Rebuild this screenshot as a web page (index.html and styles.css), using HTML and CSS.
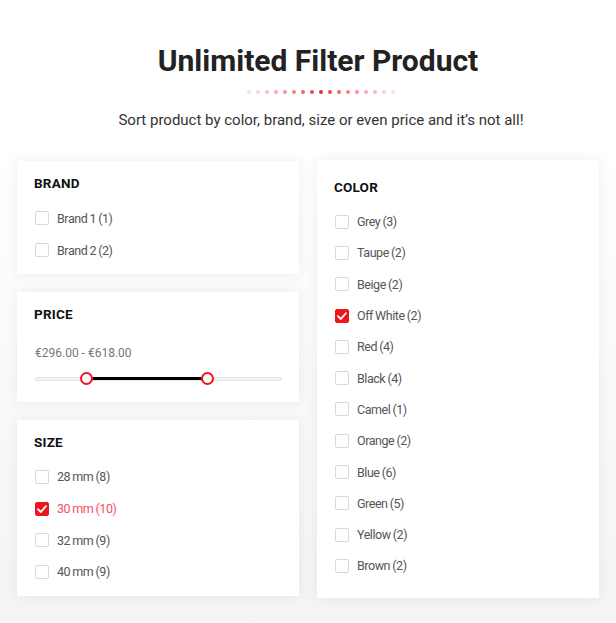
FILE: index.html
```html
<!DOCTYPE html>
<html lang="en">
<head>
<meta charset="utf-8">
<title>Unlimited Filter Product</title>
<link rel="stylesheet" href="styles.css">
</head>
<body>
<header class="hero">
  <h1 class="hero-title">Unlimited Filter Product</h1>
  <div class="dots">
    <span class="dot o1"></span><span class="dot o2"></span><span class="dot o3"></span><span class="dot o4"></span><span class="dot o5"></span><span class="dot o6"></span><span class="dot o7"></span><span class="dot o8"></span><span class="dot o9"></span><span class="dot o8"></span><span class="dot o7"></span><span class="dot o6"></span><span class="dot o5"></span><span class="dot o4"></span><span class="dot o3"></span><span class="dot o2"></span><span class="dot o1"></span>
  </div>
  <p class="hero-sub">Sort product by color, brand, size or even price and it’s not all!</p>
</header>

<main class="filters">
  <div class="col">
    <section class="card card-brand">
      <h2 class="card-title">BRAND</h2>
      <ul class="opts">
        <li class="opt"><span class="box"></span><span class="lbl">Brand 1 (1)</span></li>
        <li class="opt"><span class="box"></span><span class="lbl">Brand 2 (2)</span></li>
      </ul>
    </section>

    <section class="card card-price">
      <h2 class="card-title">PRICE</h2>
      <div class="price">€296.00 - €618.00</div>
      <div class="slider">
        <div class="track"></div>
        <div class="range" style="left:51px;width:121px"></div>
        <span class="knob" style="left:51px"></span>
        <span class="knob" style="left:172px"></span>
      </div>
    </section>

    <section class="card">
      <h2 class="card-title">SIZE</h2>
      <ul class="opts opts-mid">
        <li class="opt"><span class="box"></span><span class="lbl">28 mm (8)</span></li>
        <li class="opt active"><span class="box on"><svg viewBox="0 0 14 14" width="14" height="14"><path d="M3 7.2 L5.8 10 L11 4.2" fill="none" stroke="#fff" stroke-width="1.8" stroke-linecap="round" stroke-linejoin="round"/></svg></span><span class="lbl">30 mm (10)</span></li>
        <li class="opt"><span class="box"></span><span class="lbl">32 mm (9)</span></li>
        <li class="opt"><span class="box"></span><span class="lbl">40 mm (9)</span></li>
      </ul>
    </section>
  </div>

  <section class="card card-color">
    <h2 class="card-title">COLOR</h2>
    <ul class="opts opts-tight">
      <li class="opt"><span class="box"></span><span class="lbl">Grey (3)</span></li>
      <li class="opt"><span class="box"></span><span class="lbl">Taupe (2)</span></li>
      <li class="opt"><span class="box"></span><span class="lbl">Beige (2)</span></li>
      <li class="opt"><span class="box on"><svg viewBox="0 0 14 14" width="14" height="14"><path d="M3 7.2 L5.8 10 L11 4.2" fill="none" stroke="#fff" stroke-width="1.8" stroke-linecap="round" stroke-linejoin="round"/></svg></span><span class="lbl">Off White (2)</span></li>
      <li class="opt"><span class="box"></span><span class="lbl">Red (4)</span></li>
      <li class="opt"><span class="box"></span><span class="lbl">Black (4)</span></li>
      <li class="opt"><span class="box"></span><span class="lbl">Camel (1)</span></li>
      <li class="opt"><span class="box"></span><span class="lbl">Orange (2)</span></li>
      <li class="opt"><span class="box"></span><span class="lbl">Blue (6)</span></li>
      <li class="opt"><span class="box"></span><span class="lbl">Green (5)</span></li>
      <li class="opt"><span class="box"></span><span class="lbl">Yellow (2)</span></li>
      <li class="opt"><span class="box"></span><span class="lbl">Brown (2)</span></li>
    </ul>
  </section>
</main>
</body>
</html>
```

FILE: styles.css
```css
* { box-sizing: border-box; }

html, body {
  margin: 0;
  padding: 0;
}

body {
  width: 616px;
  min-height: 623px;
  font-family: Roboto, "Liberation Sans", Arial, sans-serif;
  background: linear-gradient(to bottom, #ffffff 0px, #ffffff 140px, #f4f4f4 623px);
  color: #333;
}

.hero {
  padding-top: 44px;
  padding-left: 26px;
  text-align: center;
}

.hero-title {
  margin: 0;
  padding-right: 6px;
  font-size: 30px;
  line-height: 34px;
  font-weight: 700;
  color: #222;
}

.dots {
  margin-top: 12px;
  display: flex;
  justify-content: center;
  gap: 5px;
  height: 4px;
}

.dot {
  width: 4px;
  height: 4px;
  border-radius: 50%;
  background: #f0263f;
}
.o1 { opacity: 0.15; }
.o2 { opacity: 0.22; }
.o3 { opacity: 0.3; }
.o4 { opacity: 0.4; }
.o5 { opacity: 0.5; }
.o6 { opacity: 0.6; }
.o7 { opacity: 0.72; }
.o8 { opacity: 0.85; }
.o9 { opacity: 1; }

.hero-sub {
  margin: 16px 0 0;
  font-size: 15px;
  line-height: 20px;
  color: #333;
}

.filters {
  margin-top: 30px;
  padding: 0 17px;
  display: grid;
  grid-template-columns: 282px 282px;
  column-gap: 18px;
  align-items: start;
}

.col {
  display: flex;
  flex-direction: column;
  gap: 18px;
  padding-top: 1px;
}

.card {
  background: #fff;
  box-shadow: 0 0 12px rgba(0, 0, 0, 0.07);
  padding: 14px 17px 8px;
}

.card-title {
  margin: 0;
  font-size: 13.5px;
  line-height: 16px;
  font-weight: 700;
  color: #111;
  letter-spacing: 0.2px;
}

.opts {
  list-style: none;
  margin: 11px 0 0;
  padding: 0;
}

.opt {
  height: 32px;
  display: flex;
  align-items: center;
  gap: 8px;
  padding-left: 1px;
}

.opts-mid .opt { height: 31.7px; }
.opts-tight .opt { height: 31.3px; }

.box {
  width: 14px;
  height: 14px;
  border: 1px solid #d9d9d9;
  border-radius: 2px;
  background: #fff;
  flex: none;
  display: flex;
}

.box.on {
  background: #f0141e;
  border-color: #f0141e;
}
.box.on svg { margin: -1px; }

.lbl {
  font-size: 12.5px;
  color: #555;
  letter-spacing: -0.45px;
  word-spacing: -0.5px;
}

.active .lbl { color: #f5505a; }

.card-price { padding-bottom: 17px; }

.price {
  margin-top: 23px;
  font-size: 12px;
  line-height: 16px;
  color: #777;
  padding-left: 1px;
}

.slider {
  position: relative;
  margin-top: 11px;
  height: 13px;
  margin-left: 1px;
}

.track {
  position: absolute;
  left: 0;
  right: 0;
  top: 4.5px;
  height: 4px;
  border: 1px solid #e6e6e6;
  background: #f4f4f4;
  border-radius: 2px;
}

.range {
  position: absolute;
  top: 5px;
  height: 3px;
  background: #000;
}

.knob {
  position: absolute;
  top: 0;
  width: 13px;
  height: 13px;
  margin-left: -6.5px;
  border-radius: 50%;
  background: #fff;
  border: 2px solid #f0141e;
}

.card-color {
  padding-top: 19px;
  padding-bottom: 16px;
}
.card-color .opts { margin-top: 11px; }
```
